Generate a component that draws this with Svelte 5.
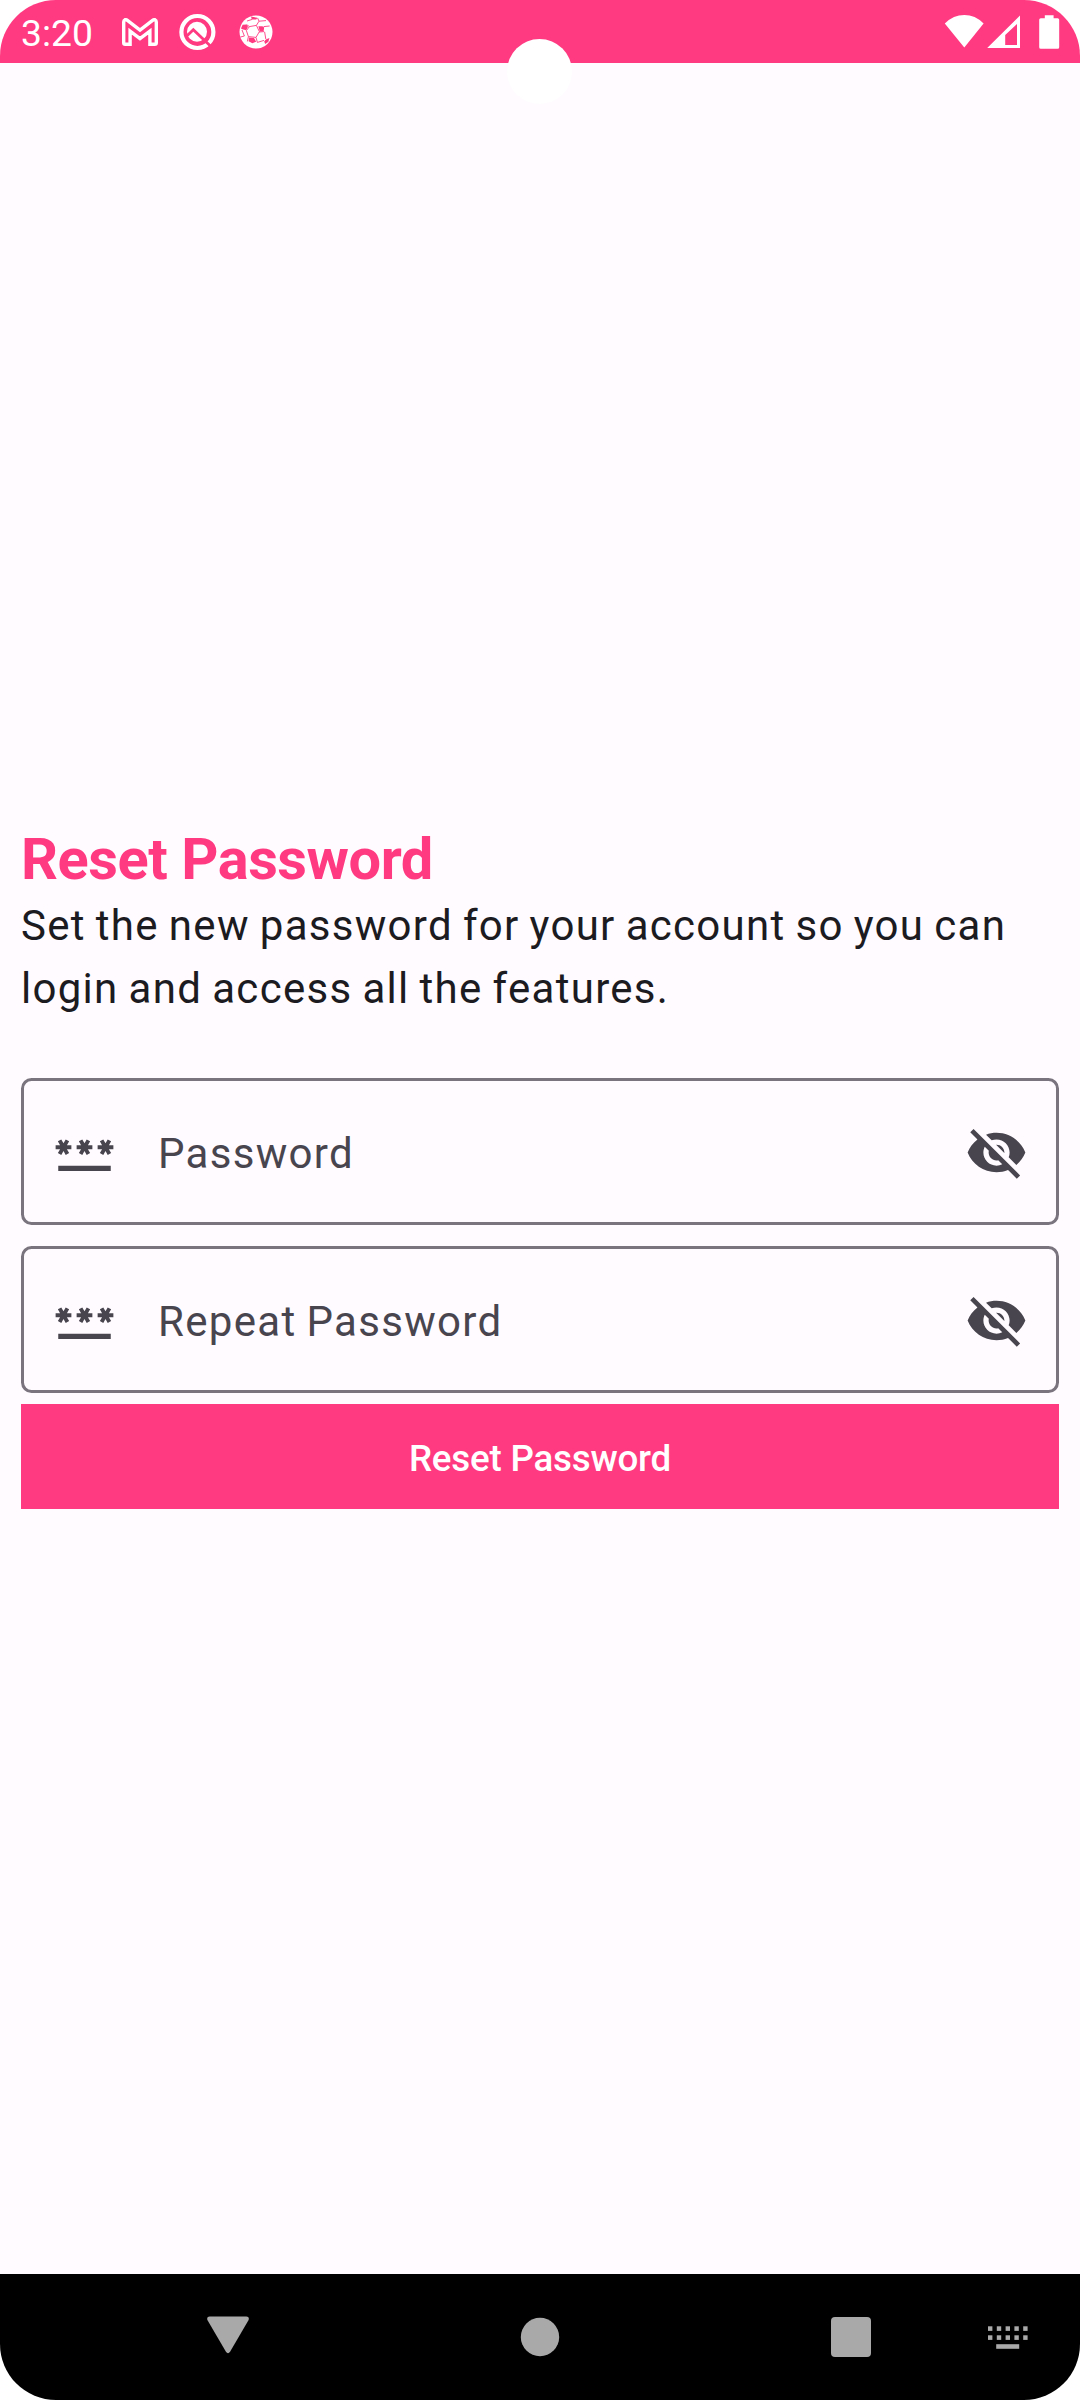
<script>
  const fields = ['Password', 'Repeat Password'];
  const keyRows = [0.3, 9.3];
  const keyCols = [0, 8.8, 17.6, 26.4, 35.2];
</script>

<div class="screen">
  <header class="status">
    <span class="time">3:20</span>
    <svg class="mail" width="36" height="28" viewBox="0 0 36 28">
      <path d="M3 1.7Q4.2 1.5 5.4 2.4L18 12 30.6 2.4Q31.8 1.5 33 1.7Q34.3 2.3 34.3 4V24.8Q34.3 26.3 32.8 26.3H27.9V13.2L18 20.6 8.1 13.2V26.3H3.2Q1.7 26.3 1.7 24.8V4Q1.7 2.3 3 1.7Z" />
    </svg>
    <svg class="search" width="38" height="38" viewBox="0 0 38 38">
      <circle class="ring" cx="18.4" cy="19" r="16" />
      <circle cx="18" cy="18.8" r="10" />
      <path class="handle" d="M7.6 23.2L14.3 16.8L33 34.6" />
    </svg>
    <svg class="ball" width="34" height="34" viewBox="0 0 34 34">
      <circle cx="17" cy="17" r="16.5" />
      <path class="seam" d="M10.4 11.6L17.4 10.4 20.4 16.6 17 22.4 9.4 21.6 7.4 15.6ZM17.4 10.4L20 6.2 18.6 3M20 6.2L27 5.6M24.6 11.6L30.6 11M25.6 16.8L26.8 24M20 17L25 16.6M17 22.4L18.4 27.4 25 25.4M9.4 21.6L8.4 26.4M3 15L5.4 21 1.4 22M10.4 11.6L7.6 9.6M13.2 4.4L8 6" />
      <path class="patch" d="M12 1.6L18.4 2.8 17.2 4.6 12.8 4.6ZM3.6 9.8L7.4 9.6 9 11.8 7.2 15.2 3.4 14.2 2 13.4ZM19.4 11.2L23.4 11.2 25.2 12.6 24.6 16.2 20.8 16.4ZM10 22.4L15 23 17.2 26.8 13.4 28.2 9.6 26.2ZM26.8 24.6L30.4 23 29.4 26.8 26.2 29 25.2 26.4Z" />
    </svg>
    <svg class="signals" width="116" height="36" viewBox="0 0 116 36">
      <path d="M.8 9.4Q9.4 1 20.3 1T39.6 9.4L20.3 33.4Z" />
      <path fill-rule="evenodd" d="M76 1.6V34H43.2ZM73 10L61.2 21V31H73Z" />
      <path d="M100.8 1.2h8.8v3h4q1.6 0 1.6 1.6v27.4q0 1.6-1.6 1.6H96.8q-1.6 0-1.6-1.6V5.8q0-1.6 1.6-1.6h4Z" />
    </svg>
  </header>
  <div class="camera"></div>

  <main>
    <h1>Reset Password</h1>
    <p>Set the new password for your account so you can login and access all the features.</p>
    {#each fields as label}
      <div class="field">
        <svg class="icon" viewBox="0 0 24 24">
          <path d="M2 17h20v2H2zM3.15 12.95L4 11.47l.85 1.48 1.3-.75-.85-1.48H7v-1.5H5.3l.85-1.47L4.85 7 4 8.47 3.15 7l-1.3.75.85 1.47H1v1.5h1.7l-.85 1.48zM9.85 12.2l1.3.75.85-1.48.85 1.48 1.3-.75-.85-1.48H15v-1.5h-1.7l.85-1.47-1.3-.75L12 8.47 11.15 7l-1.3.75.85 1.47H9v1.5h1.7zM23 9.22h-1.7l.85-1.47-1.3-.75L20 8.47 19.15 7l-1.3.75.85 1.47H17v1.5h1.7l-.85 1.48 1.3.75.85-1.48.85 1.48 1.3-.75-.85-1.48H23z" />
        </svg>
        <span>{label}</span>
        <svg class="icon" viewBox="0 0 24 24">
          <path d="M12 7c2.76 0 5 2.24 5 5 0 .65-.13 1.26-.36 1.83l2.92 2.92c1.51-1.26 2.7-2.89 3.43-4.75-1.73-4.39-6-7.5-11-7.5-1.4 0-2.74.25-3.98.7l2.16 2.16C10.74 7.13 11.35 7 12 7zM2 4.27l2.28 2.28.46.46C3.08 8.3 1.78 10.02 1 12c1.73 4.39 6 7.5 11 7.5 1.55 0 3.03-.3 4.38-.84l.42.42L19.73 22 21 20.73 3.27 3 2 4.27zM7.53 9.8l1.55 1.55c-.05.21-.08.43-.08.65 0 1.66 1.34 3 3 3 .22 0 .44-.03.65-.08l1.55 1.55c-.67.33-1.41.53-2.2.53-2.76 0-5-2.24-5-5 0-.79.2-1.53.53-2.2zm4.31-.78l3.15 3.15.02-.16c0-1.66-1.34-3-3-3l-.17.01z" />
        </svg>
      </div>
    {/each}
    <button>Reset Password</button>
  </main>

  <nav>
    <svg class="back" width="42" height="38" viewBox="0 0 42 38">
      <path d="M2.6.4H39.4Q42.6.6 41.6 4L23.2 35.6Q21 39 18.8 35.6L.4 4Q-.6.6 2.6.4Z" />
    </svg>
    <svg class="home" width="40" height="40" viewBox="0 0 40 40"><circle cx="20" cy="20" r="19.2" /></svg>
    <svg class="recent" width="40" height="40" viewBox="0 0 40 40"><rect width="40" height="40" rx="4" /></svg>
    <svg class="keyboard" width="40" height="23" viewBox="0 0 40 23">
      {#each keyRows as y}
        {#each keyCols as x}
          <rect {x} {y} width="4.4" height="4.6" />
        {/each}
      {/each}
      <rect x="8.2" y="18.2" width="23" height="4.6" />
    </svg>
  </nav>
</div>

<style>
  :global(body) {
    margin: 0;
    background: #fff;
  }
  .screen {
    position: relative;
    box-sizing: border-box;
    width: 1080px;
    height: 2400px;
    display: flex;
    flex-direction: column;
    overflow: hidden;
    border-radius: 56px;
    background: #fffbff;
    color: #1c1b1f;
    font-family: Roboto, sans-serif;
  }
  svg {
    display: block;
    flex: none;
  }
  .status {
    display: flex;
    align-items: center;
    box-sizing: border-box;
    height: 63px;
    padding: 0 20px 0 21px;
    background: #ff3a80;
    color: #fff;
    fill: #fff;
  }
  .time {
    width: 101px;
    padding-top: 2px;
    font-size: 37.25px;
    line-height: 44px;
  }
  .mail {
    fill: none;
    stroke: #fff;
    stroke-width: 3.4;
  }
  .search {
    margin-left: 21px;
  }
  .ring {
    fill: none;
    stroke: #fff;
    stroke-width: 4.2;
  }
  .handle {
    fill: none;
    stroke: #ff3a80;
    stroke-width: 2.8;
  }
  .ball {
    margin-left: 22px;
  }
  .seam {
    fill: none;
    stroke: #ff3a80;
    stroke-width: 0.9;
  }
  .patch {
    fill: #ff3a80;
  }
  .signals {
    margin-left: auto;
  }
  .camera {
    position: absolute;
    top: 39px;
    left: 507px;
    width: 65px;
    height: 65px;
    border-radius: 50%;
    background: #fff;
  }
  main {
    flex: 1;
    display: flex;
    flex-direction: column;
    justify-content: center;
    padding: 0 21px 2px;
  }
  h1 {
    margin: 0 0 2px;
    color: #ff3a80;
    font-size: 57.75px;
    line-height: 66px;
    font-weight: 700;
    letter-spacing: -0.45px;
  }
  p {
    margin: 0 0 58px;
    font-size: 42px;
    line-height: 63px;
    letter-spacing: 1.29px;
    word-spacing: -1.7px;
  }
  .field {
    display: flex;
    align-items: center;
    box-sizing: border-box;
    height: 147px;
    margin-bottom: 21px;
    padding: 1px 28.5px 0;
    border: 3px solid #79747e;
    border-radius: 10.5px;
    color: #49454f;
    fill: #49454f;
    font-size: 42px;
    line-height: 63px;
    letter-spacing: 1.3125px;
    word-spacing: -1.7px;
  }
  .field span {
    flex: 1;
    margin-left: 42.5px;
    padding-top: 3px;
  }
  .icon {
    width: 63px;
    height: 63px;
  }
  button {
    height: 105px;
    margin: -10px 0 0;
    padding: 5px 0 0;
    border: 0;
    background: #ff3a80;
    color: #fff;
    font: 500 36.75px/52px Roboto, sans-serif;
    letter-spacing: -0.22px;
  }
  nav {
    display: flex;
    box-sizing: border-box;
    height: 126px;
    padding: 43px 0 0 207px;
    background: #000;
    fill: #a9a9a9;
  }
  .back {
    margin-top: -1px;
  }
  .home {
    margin-left: 271px;
  }
  .recent {
    margin-left: 271px;
  }
  .keyboard {
    margin: 9px 0 0 117px;
  }
</style>
